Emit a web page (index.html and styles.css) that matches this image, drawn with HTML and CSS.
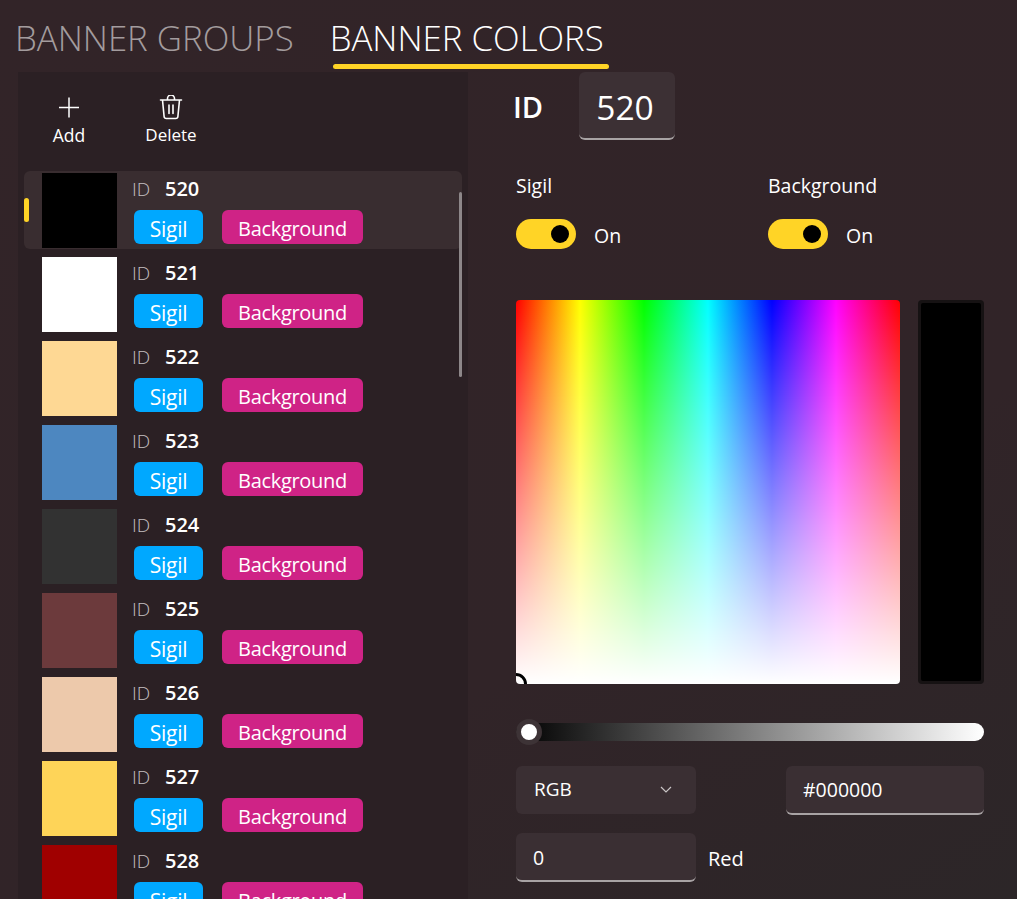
FILE: index.html
```html
<!DOCTYPE html>
<html lang="en">
<head>
  <meta charset="UTF-8">
  <meta name="viewport" content="width=device-width, initial-scale=1.0">
  <title>Banner Colors</title>
  <link rel="stylesheet" href="styles.css">
</head>
<body>

  <nav class="tabs">
    <a class="tab">BANNER GROUPS</a>
    <a class="tab tab-active">BANNER COLORS</a>
  </nav>

  <main class="layout">
    <section class="panel">
      <div class="toolbar">
        <button class="tool tool-add">
          <svg width="22" height="22" viewBox="0 0 22 22"><path d="M11 1v20M1 11h20" stroke="#fff" stroke-width="1.5" fill="none"/></svg>
          <span>Add</span>
        </button>
        <button class="tool tool-delete">
          <svg width="24" height="25" viewBox="0 0 24 25" fill="none" stroke="#fff" stroke-width="1.6" stroke-linejoin="round" stroke-linecap="round"><path d="M1.5 5h21M8.5 5V3.5a2.5 2.5 0 0 1 7 0V5M3.5 5l1.6 16.5a2.2 2.2 0 0 0 2.2 2h9.4a2.2 2.2 0 0 0 2.2-2L20.500 5M10 10v8.500M14 10v8.500"/></svg>
          <span>Delete</span>
        </button>
      </div>

      <div class="list">
        <div class="scrollbar"></div>
        <div class="row row-selected">
          <div class="swatch swatch-520"></div>
          <div class="row-info">
            <div class="row-id"><span class="id-label">ID</span><b>520</b></div>
            <div class="chips"><span class="chip chip-sigil">Sigil</span><span class="chip chip-bg">Background</span></div>
          </div>
        </div>
        <div class="row">
          <div class="swatch swatch-521"></div>
          <div class="row-info">
            <div class="row-id"><span class="id-label">ID</span><b>521</b></div>
            <div class="chips"><span class="chip chip-sigil">Sigil</span><span class="chip chip-bg">Background</span></div>
          </div>
        </div>
        <div class="row">
          <div class="swatch swatch-522"></div>
          <div class="row-info">
            <div class="row-id"><span class="id-label">ID</span><b>522</b></div>
            <div class="chips"><span class="chip chip-sigil">Sigil</span><span class="chip chip-bg">Background</span></div>
          </div>
        </div>
        <div class="row">
          <div class="swatch swatch-523"></div>
          <div class="row-info">
            <div class="row-id"><span class="id-label">ID</span><b>523</b></div>
            <div class="chips"><span class="chip chip-sigil">Sigil</span><span class="chip chip-bg">Background</span></div>
          </div>
        </div>
        <div class="row">
          <div class="swatch swatch-524"></div>
          <div class="row-info">
            <div class="row-id"><span class="id-label">ID</span><b>524</b></div>
            <div class="chips"><span class="chip chip-sigil">Sigil</span><span class="chip chip-bg">Background</span></div>
          </div>
        </div>
        <div class="row">
          <div class="swatch swatch-525"></div>
          <div class="row-info">
            <div class="row-id"><span class="id-label">ID</span><b>525</b></div>
            <div class="chips"><span class="chip chip-sigil">Sigil</span><span class="chip chip-bg">Background</span></div>
          </div>
        </div>
        <div class="row">
          <div class="swatch swatch-526"></div>
          <div class="row-info">
            <div class="row-id"><span class="id-label">ID</span><b>526</b></div>
            <div class="chips"><span class="chip chip-sigil">Sigil</span><span class="chip chip-bg">Background</span></div>
          </div>
        </div>
        <div class="row">
          <div class="swatch swatch-527"></div>
          <div class="row-info">
            <div class="row-id"><span class="id-label">ID</span><b>527</b></div>
            <div class="chips"><span class="chip chip-sigil">Sigil</span><span class="chip chip-bg">Background</span></div>
          </div>
        </div>
        <div class="row">
          <div class="swatch swatch-528"></div>
          <div class="row-info">
            <div class="row-id"><span class="id-label">ID</span><b>528</b></div>
            <div class="chips"><span class="chip chip-sigil">Sigil</span><span class="chip chip-bg">Background</span></div>
          </div>
        </div>
      </div>
    </section>

    <section class="editor">
      <div class="id-field">
        <span class="id-title">ID</span>
        <div class="id-box">520</div>
      </div>

      <div class="toggles">
        <div class="toggle-group">
          <div class="toggle-title">Sigil</div>
          <div class="toggle-line"><span class="switch"><i></i></span><span class="toggle-state">On</span></div>
        </div>
        <div class="toggle-group">
          <div class="toggle-title">Background</div>
          <div class="toggle-line"><span class="switch"><i></i></span><span class="toggle-state">On</span></div>
        </div>
      </div>

      <div class="picker">
        <div class="spectrum"><i class="marker"></i></div>
        <div class="preview"><div class="preview-fill"></div></div>
      </div>

      <div class="value-slider"><i class="slider-thumb"></i></div>

      <div class="mode-line">
        <div class="combo">
          <span>RGB</span>
          <svg width="12" height="7" viewBox="0 0 12 7"><path d="M1 1l5 5 5-5" stroke="#c9c5c6" stroke-width="1.200" fill="none"/></svg>
        </div>
        <div class="textbox hex">#000000</div>
      </div>

      <div class="channel-line">
        <div class="textbox channel">0</div>
        <span class="channel-name">Red</span>
      </div>
    </section>
  </main>

</body>
</html>
```

FILE: styles.css
```css
html, body {
  height: 100%;
}
body {
  margin: 0;
  height: 899px;
  overflow: hidden;
  background: linear-gradient(150deg, #322428 0%, #312428 65%, #2c2628 100%);
  color: #fff;
  font-family: 'Open Sans', 'Noto Sans', sans-serif;
}

/* tabs */
.tabs {
  display: flex;
  gap: 36px;
  height: 72px;
  padding-left: 15px;
  box-sizing: border-box;
}
.tab {
  position: relative;
  padding-top: 14px;
  font-size: 34.8px;
  line-height: 48px;
  font-weight: 300;
  color: #a39c9e;
}
.tab-active {
  color: #fff;
}
.tab-active::after {
  content: "";
  position: absolute;
  left: 3px;
  right: -5px;
  top: 64px;
  height: 5px;
  border-radius: 3px;
  background: #ffd426;
}

.layout {
  display: flex;
  height: 827px;
}

/* left list */
.panel {
  width: 450px;
  margin-left: 18px;
  background: #2b2024;
  overflow: hidden;
  flex: none;
}
.toolbar {
  display: flex;
  height: 99px;
  box-sizing: border-box;
}
.tool {
  display: flex;
  flex-direction: column;
  align-items: center;
  width: 102px;
  padding: 23px 0 0;
  margin: 0;
  background: none;
  border: none;
  color: #fff;
  font: inherit;
  font-size: 17.5px;
  line-height: 22px;
}
.tool-delete {
  font-size: 17px;
}
.tool svg {
  display: block;
  height: 25px;
  margin-bottom: 4px;
}
.list {
  position: relative;
}
.scrollbar {
  position: absolute;
  right: 6px;
  top: 21px;
  width: 3px;
  height: 185px;
  border-radius: 2px;
  background: #8d8789;
  z-index: 1;
}
.row {
  display: flex;
  position: relative;
  height: 78px;
  margin: 0 6px 6px;
  padding-left: 18px;
  padding-top: 2px;
  box-sizing: border-box;
  border-radius: 6px;
}
.row-selected {
  background: #392d30;
}
.row-selected::before {
  content: "";
  position: absolute;
  left: 0;
  top: 27px;
  width: 5px;
  height: 24px;
  border-radius: 3px;
  background: #ffd426;
}
.swatch {
  width: 75px;
  height: 75px;
  flex: none;
}
.swatch-520 { background: #000000; }
.swatch-521 { background: #ffffff; }
.swatch-522 { background: #fed894; }
.swatch-523 { background: #4d87c0; }
.swatch-524 { background: #323232; }
.swatch-525 { background: #6c3a3c; }
.swatch-526 { background: #edc9ab; }
.swatch-527 { background: #fed458; }
.swatch-528 { background: #a00000; }

.row-info {
  padding-left: 15px;
}
.row-id {
  display: flex;
  align-items: center;
  height: 31px;
  font-size: 19px;
}
.id-label {
  width: 33px;
  color: #c4bfc0;
  font-weight: 300;
}
.row-id b {
  font-size: 20px;
  font-weight: 600;
}
.chips {
  display: flex;
  gap: 19px;
  margin-top: 6px;
  margin-left: 2px;
}
.chip {
  height: 34px;
  line-height: 38px;
  border-radius: 6px;
  text-align: center;
  font-size: 20px;
  letter-spacing: -0.3px;
}
.chip-sigil {
  width: 69px;
  background: #00a8ff;
  font-size: 21px;
}
.chip-bg {
  width: 141px;
  background: #cf2386;
}

/* right side */
.editor {
  margin-left: 48px;
  width: 468px;
  flex: none;
}
.id-field {
  display: flex;
  align-items: center;
  height: 68px;
}
.id-title {
  width: 66px;
  margin-left: -3px;
  font-size: 29px;
  font-weight: 600;
}
.id-box {
  width: 96px;
  height: 68px;
  box-sizing: border-box;
  border-radius: 6px;
  border-bottom: 2px solid #a8a3a4;
  background: #3c3034;
  padding-right: 4px;
  text-align: center;
  font-size: 33.500px;
  line-height: 70px;
}
.toggles {
  display: flex;
  margin-top: 32px;
}
.toggle-group {
  width: 252px;
  flex: none;
}
.toggle-title {
  font-size: 19.500px;
  line-height: 28px;
}
.toggle-line {
  display: flex;
  align-items: center;
  gap: 18px;
  margin-top: 19px;
  font-size: 19.500px;
  height: 30px;
}
.toggle-state {
  padding-top: 3px;
}
.switch {
  display: flex;
  justify-content: flex-end;
  align-items: center;
  width: 60px;
  height: 30px;
  padding-right: 7px;
  box-sizing: border-box;
  border-radius: 15px;
  background: #ffd426;
}
.switch i {
  width: 18px;
  height: 18px;
  border-radius: 50%;
  background: #000;
}
.picker {
  display: flex;
  gap: 18px;
  margin-top: 51px;
}
.spectrum {
  position: relative;
  overflow: hidden;
  width: 384px;
  height: 384px;
  border-radius: 4px;
  background:
    linear-gradient(to top, #fff 0%, rgba(255, 255, 255, 0) 100%),
    linear-gradient(to right, #f00 0%, #ff0 16.67%, #0f0 33.33%, #0ff 50%, #00f 66.67%, #f0f 83.33%, #f00 100%);
}
.marker {
  position: absolute;
  left: -11px;
  bottom: -11px;
  width: 16px;
  height: 16px;
  border: 3px solid #000;
  border-radius: 50%;
}
.preview {
  width: 66px;
  height: 384px;
  box-sizing: border-box;
  padding: 3px;
  border-radius: 4px;
  background: #161213;
}
.preview-fill {
  height: 100%;
  background: #000;
  border-radius: 2px;
}
.value-slider {
  position: relative;
  height: 18px;
  margin-top: 39px;
  border-radius: 9px;
  background: linear-gradient(to right, #000, #fff);
}
.slider-thumb {
  position: absolute;
  left: 0;
  top: -4px;
  width: 16px;
  height: 16px;
  border: 5px solid #3d3336;
  border-radius: 50%;
  background: #fff;
}
.mode-line {
  display: flex;
  justify-content: space-between;
  margin-top: 25px;
}
.combo {
  display: flex;
  justify-content: space-between;
  align-items: center;
  width: 180px;
  height: 48px;
  padding: 0 24px 2px 18px;
  box-sizing: border-box;
  border-radius: 6px;
  background: #3a2f33;
  font-size: 19px;
}
.textbox {
  height: 49px;
  box-sizing: border-box;
  border-radius: 6px;
  border-bottom: 2px solid #a8a3a4;
  background: #3a2f33;
  font-size: 19.500px;
  line-height: 49px;
  padding-left: 17px;
}
.hex {
  width: 198px;
  line-height: 47px;
}
.channel-line {
  display: flex;
  align-items: center;
  gap: 12px;
  margin-top: 18px;
  font-size: 20px;
}
.channel {
  width: 180px;
}
.channel-name {
  padding-top: 2px;
}
```
